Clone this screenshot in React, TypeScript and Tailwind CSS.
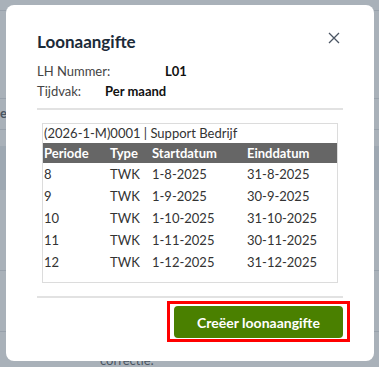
import React from "react";

const rows = [
  ["8", "TWK", "1-8-2025", "31-8-2025"],
  ["9", "TWK", "1-9-2025", "30-9-2025"],
  ["10", "TWK", "1-10-2025", "31-10-2025"],
  ["11", "TWK", "1-11-2025", "30-11-2025"],
  ["12", "TWK", "1-12-2025", "31-12-2025"],
];

export default function App() {
  return (
    <div
      className="relative w-[379px] h-[367px] overflow-hidden bg-[#a9b1b9]"
      style={{ fontFamily: "Lato, 'Noto Sans', sans-serif" }}
    >
      {/* background page hints */}
      <div className="absolute left-0 top-[10px] w-full h-px bg-[#98a1ab]" />
      <div className="absolute left-0 top-[98px] w-full h-px bg-[#98a1ab]" />
      <div className="absolute left-0 top-[129px] w-full h-px bg-[#98a1ab]" />
      <div className="absolute left-0 top-[146px] w-full h-[44px] bg-[#9ea8b2]" />
      <div className="absolute left-0 top-[270px] w-full h-px bg-[#98a1ab]" />
      <div className="absolute left-0 top-[331px] w-full h-px bg-[#98a1ab]" />
      <div className="absolute left-0 top-[104px] text-[13px] font-bold text-[#4a5562]">e</div>
      <div className="absolute left-[100px] top-[351px] text-[13px] text-[#4a5562]">correctie:</div>

      {/* modal */}
      <div className="absolute left-[6px] top-[5px] w-[368px] h-[356px] bg-white rounded-[8px] px-[31px] pt-[25px]">
        <div className="flex items-start justify-between">
          <h2 className="text-[17px] font-bold text-[#1c2b39] leading-[24px]">Loonaangifte</h2>
          <svg width="12" height="12" viewBox="0 0 12 12" className="mt-[2px] mr-[3px]">
            <path d="M1 1L11 11M11 1L1 11" stroke="#4b5563" strokeWidth="1.3" />
          </svg>
        </div>
        <div className="mt-[7px] text-[13px] text-[#444] leading-[20px]">
          <div className="flex">
            <span className="w-[128px]">LH Nummer:</span>
            <span className="font-bold text-[#111]">L01</span>
          </div>
          <div className="flex">
            <span className="w-[68px]">Tijdvak:</span>
            <span className="font-bold text-[#111]">Per maand</span>
          </div>
        </div>
        <div className="mt-[7px] h-[2px] bg-[#e2e2e2]" />

        <div className="mt-[13px] mx-[5px] h-[160px] border border-[#dcdcdc] text-[13px] text-[#333]">
          <div className="h-[19px] leading-[19px] px-px">(2026-1-M)0001 | Support Bedrijf</div>
          <div className="grid grid-cols-[66px_42px_95px_1fr] bg-[#666666] text-white font-bold h-[20px] leading-[20px] px-px">
            <span>Periode</span>
            <span>Type</span>
            <span>Startdatum</span>
            <span>Einddatum</span>
          </div>
          {rows.map((r) => (
            <div key={r[0]} className="grid grid-cols-[66px_42px_95px_1fr] h-[22px] leading-[22px] px-px">
              <span>{r[0]}</span>
              <span>{r[1]}</span>
              <span>{r[2]}</span>
              <span>{r[3]}</span>
            </div>
          ))}
        </div>

        <div className="mt-[13px] h-[2px] bg-[#e2e2e2]" />

        <div className="flex justify-end mt-[3px] mr-[-7px]">
          <div className="border-[3px] border-[#ff0000] px-[4px] pt-[2px] pb-[1px]">
            <button className="block w-[169px] h-[32px] bg-[#4a8000] rounded-[4px] text-white font-bold text-[14px]">
              Creëer loonaangifte
            </button>
          </div>
        </div>
      </div>
    </div>
  );
}
